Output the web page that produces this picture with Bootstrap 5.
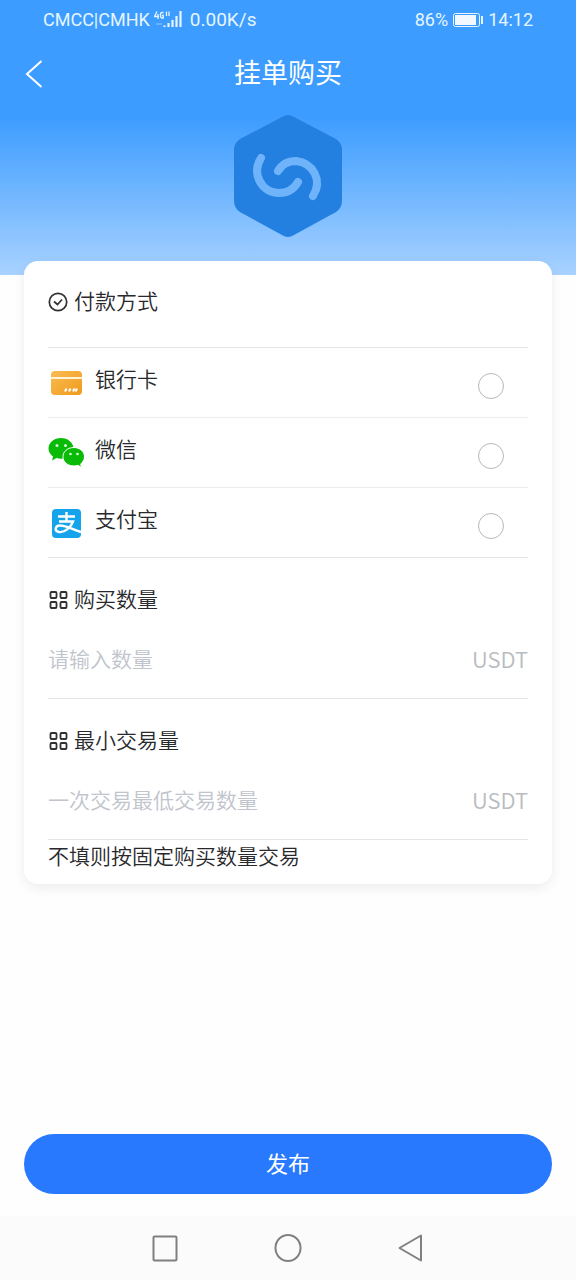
<!DOCTYPE html>
<html lang="zh-CN">
<head>
<meta charset="utf-8">
<meta name="viewport" content="width=device-width, initial-scale=1">
<title>挂单购买</title>
<link href="https://cdn.jsdelivr.net/npm/bootstrap@5.3.0/dist/css/bootstrap.min.css" rel="stylesheet">
<style>
  body { font-family: Roboto, "Noto Sans CJK SC", sans-serif; font-weight: 350; color: #28292c; background: #fefefe; font-size: 21px; line-height: 30px; }
  svg { display: block; flex: none; }
  .top-zone { background: #3c9cff; color: #fff; }
  .status-bar { height: 40px; padding: 0 43px; font-size: 18px; line-height: 40px; font-weight: 400; color: #e6f6ff; }
  .net-speed { font-size: 19px; }
  .title-bar { display: grid; grid-template-columns: 68px 1fr 68px; align-items: center; height: 68px; }
  .title-bar h1 { font-size: 27px; line-height: 36px; }
  .back-btn { padding: 0 0 0 25px; border: 0; }
  .hero { background: linear-gradient(#3c9cff 5%, #a8d2ff); height: 167px; padding-top: 6px; }
  .sheet { margin: -14px 24px 0; padding: 0 24px 12px; border: 0; border-radius: 14px; background: #fff; box-shadow: 0 4px 12px rgba(0,0,0,.07); color: inherit; }
  .section-head { font-size: 21px; line-height: 30px; font-weight: 350; gap: 6px; margin: 0; }
  .pay-head { padding: 26px 0 30px; border-bottom: 1px solid #e4e5e8; }
  .pay-row { height: 70px; border-bottom: 1px solid #ececef; cursor: pointer; }
  .pay-row:last-child { border-color: #e4e5e8; }
  .pay-icon { width: 36px; margin-right: 11px; }
  .pay-name { margin-bottom: 6px; }
  .pay-row .form-check-input { width: 26px; height: 26px; margin: 6px 24px 0 0; border: 1px solid #b8b8ba; background-color: #fff; flex: none; }
  .amount { border-bottom: 1px solid #e4e5e8; padding: 27px 0 23px; }
  .amount .section-head { margin-bottom: 30px; }
  .amount input { font-size: 21px; line-height: 30px; font-weight: 350; padding: 0; border: 0; border-radius: 0; background: none; color: inherit; }
  .amount input::placeholder { color: #c0c4cc; }
  .amount input:focus { box-shadow: none; }
  .unit { font-family: "Noto Sans CJK SC", sans-serif; font-size: 22px; line-height: 24px; margin-bottom: 4px; color: #b8bcc0; }
  .note { padding-top: 2px; }
  .submit-area { padding: 24px 24px 22px; }
  .submit-btn { --bs-btn-bg: #2979ff; --bs-btn-hover-bg: #1f6bea; height: 60px; font-size: 22px; border: 0; }
  .sys-nav { height: 64px; background: #fbfbfb; gap: 73px; }
  .sys-nav .btn { width: 50px; padding: 0; border: 0; }
</style>
</head>
<body>
<div class="d-flex flex-column min-vh-100">
  <header class="top-zone">
    <div class="status-bar d-flex justify-content-between">
      <div class="d-flex align-items-center">
        <span>CMCC|CMHK</span>
        <svg class="ms-1" width="28" height="20" viewBox="0 0 28 20" fill="none" stroke="#e6f6ff" aria-hidden="true">
          <path d="M3 1.500L.5 6.500H5M4 4V9M9.500 2.500H8Q6.500 2.500 6.500 4V6.500Q6.500 8 8 8H9.200V5.500H8M12.500 1.500V6M15 1.500V6" stroke-width="1.300"/>
          <path d="M10.500 17V15.500M14.500 17V13M18.500 17V10M22.500 17V6M26.500 17V1" stroke-width="2.200"/>
          <path d="M2 14H8" stroke-width="2" opacity=".25"/>
        </svg>
        <span class="net-speed ms-2">0.00K/s</span>
      </div>
      <div class="d-flex align-items-center">
        <span>86%</span>
        <svg class="mx-1" width="32" height="16" viewBox="0 0 32 16" aria-hidden="true">
          <rect x="1.500" y="1.500" width="26" height="13" rx="2" fill="none" stroke="#e6f6ff"/>
          <rect x="3" y="3" width="21" height="10" fill="#f2f8ff"/><rect x="29" y="4" width="2" height="8" fill="#e6f6ff"/>
        </svg>
        <span>14:12</span>
      </div>
    </div>
    <div class="title-bar">
      <button type="button" class="btn back-btn" aria-label="返回">
        <svg width="18" height="28" viewBox="0 0 18 28" fill="none" stroke="#fff" stroke-width="2"><path d="M16.500 1L2 14L16.500 27"/></svg>
      </button>
      <h1 class="m-0 text-center fw-normal">挂单购买</h1>
    </div>
    <div class="hero d-flex justify-content-center">
      <svg width="108" height="124" viewBox="0 0 108 124" fill="none" aria-hidden="true">
        <path d="M48 3Q54-1 60 3L102 25Q108 29 108 36V87Q108 94 102 98L60 121Q54 125 48 121L6 98Q0 94 0 87V36Q0 29 6 25Z" fill="#2480e0"/>
        <g stroke="#6fb3fb" stroke-width="8" stroke-linecap="round">
          <path d="M27 44C17 60 28 79 45 79C54 79 60 75 64 68"/>
          <path d="M44 57C48 50 54 47 62 47C79 49 89 66 79 82"/>
        </g>
      </svg>
    </div>
  </header>

  <main class="d-flex flex-column flex-grow-1">
    <form class="d-flex flex-column flex-grow-1">
      <div class="card sheet">
        <div class="pay-head">
          <h2 class="section-head d-flex align-items-center">
            <svg width="20" height="20" viewBox="0 0 20 20" fill="none" stroke="#303133" stroke-width="1.700" aria-hidden="true"><circle cx="10" cy="10" r="8.700"/><path d="M6 9.500L9.500 12.500L14 7.500"/></svg>
            付款方式
          </h2>
        </div>
        <div role="radiogroup" aria-label="付款方式">
          <label class="pay-row d-flex align-items-center" for="pay-card">
            <svg class="pay-icon" height="36" viewBox="0 0 36 36" aria-hidden="true">
              <defs><linearGradient id="gold" x2="1" y2="1"><stop stop-color="#f9bd52"/><stop offset="1" stop-color="#f09a1c"/></linearGradient></defs>
              <rect x="3" y="6" width="31" height="24" rx="4" fill="url(#gold)"/><path d="M3 13H34" stroke="#fff3d8" stroke-width="2"/>
              <path d="M17 26.500L18.500 23.500M21 26.500L22.500 23.500M25 26.500L26.500 23.500M27.500 26.500L29 23.500" stroke="#fff" stroke-width="2"/>
            </svg>
            <span class="pay-name me-auto">银行卡</span>
            <input class="form-check-input" type="radio" name="pay" id="pay-card">
          </label>
          <label class="pay-row d-flex align-items-center" for="pay-wechat">
            <svg class="pay-icon" height="36" viewBox="0 0 36 36" aria-hidden="true">
              <path d="M13 3C6 3 .5 7.500 .5 13.500C.5 17 2.500 19.500 5 21.500L4 25.500L8.500 23Q10.500 23.800 13 23.800C20 23.800 25.500 19 25.500 13.500S20 3 13 3Z" fill="#09bb07"/>
              <path d="M26 12.500C19.500 12.500 15 16.500 15 21.700S19.500 31 26 31Q28 31 30 30.300L33.500 32.500L32.700 29C35 27 36.500 24.700 36.500 21.700C36.500 16.500 31.500 12.500 26 12.500Z" fill="#09bb07" stroke="#fff"/>
              <g fill="#d8f5d8"><circle cx="9" cy="10.500" r="1.500"/><circle cx="17.500" cy="10.500" r="1.500"/><circle cx="22.500" cy="19" r="1.300"/><circle cx="29.500" cy="19" r="1.300"/></g>
            </svg>
            <span class="pay-name me-auto">微信</span>
            <input class="form-check-input" type="radio" name="pay" id="pay-wechat">
          </label>
          <label class="pay-row d-flex align-items-center" for="pay-alipay">
            <svg class="pay-icon" height="36" viewBox="0 0 36 36" fill="none" aria-hidden="true">
              <rect x="4" y="4" width="29" height="29" rx="4" fill="#15a3ec"/>
              <path d="M10 11.500H27M18.500 7V16.500M11 16.500H25C23 22 17 28 11 27C6 26 7 20.500 12 20.500C18 20.500 24 24 33 27" stroke="#fff" stroke-width="2.400"/>
            </svg>
            <span class="pay-name me-auto">支付宝</span>
            <input class="form-check-input" type="radio" name="pay" id="pay-alipay">
          </label>
        </div>

        <div class="amount">
          <label class="section-head d-flex align-items-center" for="qty">
            <svg width="20" height="20" viewBox="0 0 20 20" fill="none" stroke="#303133" stroke-width="1.800" aria-hidden="true"><rect x="2.500" y="2" width="6" height="6" rx="1"/><rect x="12.500" y="2" width="6" height="6" rx="1"/><rect x="2.500" y="12" width="6" height="6" rx="1"/><rect x="12.500" y="12" width="6" height="6" rx="1"/></svg>
            购买数量
          </label>
          <div class="d-flex align-items-center">
            <input class="form-control" id="qty" type="text" inputmode="decimal" placeholder="请输入数量">
            <span class="unit">USDT</span>
          </div>
        </div>
        <div class="amount">
          <label class="section-head d-flex align-items-center" for="min-qty">
            <svg width="20" height="20" viewBox="0 0 20 20" fill="none" stroke="#303133" stroke-width="1.800" aria-hidden="true"><rect x="2.500" y="2" width="6" height="6" rx="1"/><rect x="12.500" y="2" width="6" height="6" rx="1"/><rect x="2.500" y="12" width="6" height="6" rx="1"/><rect x="12.500" y="12" width="6" height="6" rx="1"/></svg>
            最小交易量
          </label>
          <div class="d-flex align-items-center">
            <input class="form-control" id="min-qty" type="text" inputmode="decimal" placeholder="一次交易最低交易数量">
            <span class="unit">USDT</span>
          </div>
        </div>
        <p class="note m-0">不填则按固定购买数量交易</p>
      </div>
      <div class="submit-area mt-auto">
        <button type="button" class="btn btn-primary submit-btn rounded-pill w-100">发布</button>
      </div>
    </form>
  </main>

  <nav class="sys-nav d-flex justify-content-center align-items-center" aria-label="系统导航">
    <button type="button" class="btn d-flex justify-content-center" aria-label="最近任务"><svg width="30" height="30" viewBox="0 0 30 30" fill="none" stroke="#808080" stroke-width="2"><rect x="3.500" y="3.500" width="23" height="24" rx="1"/></svg></button>
    <button type="button" class="btn d-flex justify-content-center" aria-label="主屏幕"><svg width="30" height="30" viewBox="0 0 30 30" fill="none" stroke="#808080" stroke-width="2"><ellipse cx="15" cy="15" rx="12.500" ry="13"/></svg></button>
    <button type="button" class="btn d-flex justify-content-center" aria-label="返回上级"><svg width="30" height="30" viewBox="0 0 30 30" fill="none" stroke="#808080" stroke-width="2" stroke-linejoin="round"><path d="M25 2.500V27.500L3.500 15Z"/></svg></button>
  </nav>
</div>
<script src="https://cdn.jsdelivr.net/npm/bootstrap@5.3.0/dist/js/bootstrap.bundle.min.js"></script>
</body>
</html>
